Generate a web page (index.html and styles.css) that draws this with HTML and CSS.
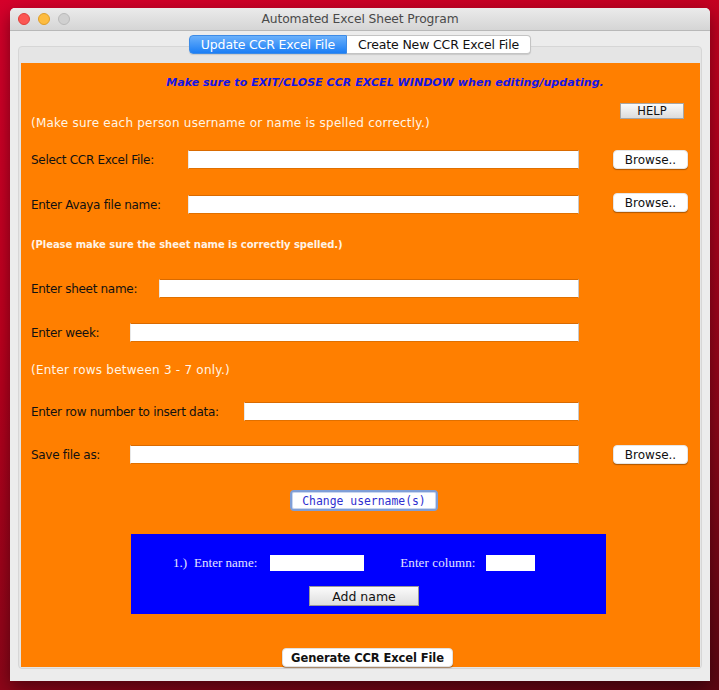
FILE: index.html
```html
<!DOCTYPE html>
<html>
<head>
<meta charset="utf-8">
<title>Automated Excel Sheet Program</title>
<link rel="stylesheet" href="styles.css">
</head>
<body>
<div class="window">
  <div class="titlebar">
    <div class="lights">
      <span class="light red"></span>
      <span class="light yellow"></span>
      <span class="light gray"></span>
    </div>
    <div class="title">Automated Excel Sheet Program</div>
  </div>
  <div class="body">
    <div class="tabs">
      <div class="tab active">Update CCR Excel File</div>
      <div class="tab">Create New CCR Excel File</div>
    </div>
    <div class="tabpanel">
      <div class="orange">
        <div class="warn">Make sure to EXIT/CLOSE CCR EXCEL WINDOW when editing/updating.</div>
        <div class="help-row">
          <div class="note">(Make sure each person username or name is spelled correctly.)</div>
          <button class="help">HELP</button>
        </div>
        <div class="row r-select">
          <span class="label w-select">Select CCR Excel File:</span>
          <span class="field"></span>
          <button class="browse">Browse..</button>
        </div>
        <div class="row r-avaya">
          <span class="label w-select">Enter Avaya file name:</span>
          <span class="field"></span>
          <button class="browse up">Browse..</button>
        </div>
        <div class="bold-note">(Please make sure the sheet name is correctly spelled.)</div>
        <div class="row r-sheet">
          <span class="label w-sheet">Enter sheet name:</span>
          <span class="field"></span>
          <span class="spacer"></span>
        </div>
        <div class="row r-week">
          <span class="label w-week">Enter week:</span>
          <span class="field"></span>
          <span class="spacer"></span>
        </div>
        <div class="note rows-note">(Enter rows between 3 - 7 only.)</div>
        <div class="row r-rownum">
          <span class="label w-rownum">Enter row number to insert data:</span>
          <span class="field"></span>
          <span class="spacer"></span>
        </div>
        <div class="row r-save">
          <span class="label w-week">Save file as:</span>
          <span class="field"></span>
          <button class="browse">Browse..</button>
        </div>
        <button class="change">Change username(s)</button>
        <div class="bluebox">
          <div class="name-row">
            <span class="serif num">1.)</span>
            <span class="serif">Enter name:</span>
            <span class="bfield wide"></span>
            <span class="serif col">Enter column:</span>
            <span class="bfield narrow"></span>
          </div>
          <button class="addname">Add name</button>
        </div>
        <button class="generate">Generate CCR Excel File</button>
      </div>
    </div>
  </div>
</div>
</body>
</html>
```
FILE: styles.css
```css
* { box-sizing: border-box; }
html, body { margin: 0; padding: 0; }
body {
  width: 719px;
  height: 690px;
  overflow: hidden;
  background: linear-gradient(160deg, #d6002b 0%, #c0001f 35%, #8e0619 72%, #5c0612 100%);
  padding: 8px 0 0 10px;
  font-family: "DejaVu Sans", sans-serif;
}
.window {
  width: 700px;
  height: 673px;
  background: #ececec;
  border-radius: 5px 5px 0 0;
  box-shadow: 0 6px 18px rgba(0,0,0,0.45);
  display: flex;
  flex-direction: column;
  overflow: hidden;
}
.titlebar {
  height: 23px;
  flex: none;
  background: linear-gradient(#ebebeb, #d5d5d5);
  border-bottom: 1px solid #b8b8b8;
  display: flex;
  align-items: center;
}
.lights { display: flex; gap: 8px; padding-left: 8px; }
.light { width: 12px; height: 12px; border-radius: 50%; display: block; }
.red { background: #fc5753; border: 1px solid #df3e3a; }
.yellow { background: #fdbc40; border: 1px solid #de9e28; }
.gray { background: #d0d0d0; border: 1px solid #b9b9b9; }
.title {
  flex: 1;
  text-align: center;
  font-size: 12.3px;
  color: #4a4a4a;
  margin-left: -60px;
  letter-spacing: -0.1px;
}
.body {
  flex: 1;
  padding: 4px 8px 0 8px;
}
.tabs {
  display: flex;
  justify-content: center;
  height: 19px;
  position: relative;
  z-index: 2;
}
.tab {
  height: 19px;
  padding: 0 11px 0 11px;
  font-size: 12.5px;
  line-height: 17px;
  background: #fff;
  border: 1px solid #c4c4c4;
  border-left: none;
  border-radius: 0 4px 4px 0;
  color: #111;
  letter-spacing: -0.15px;
  box-shadow: 0 1px 1px rgba(0,0,0,0.12);
}
.tab.active {
  background: linear-gradient(#6ab0fb, #1b7ef5);
  color: #fff;
  border: 1px solid #3d8be6;
  border-radius: 4px 0 0 4px;
  width: 158px;
  padding: 0;
  text-align: center;
}
.tabpanel {
  margin-top: -8px;
  height: 623px;
  background: #e5e5e5;
  border: 1px solid #d6d6d6;
  border-radius: 4px;
  padding: 16px 1px 1px 2px;
}
.orange {
  height: 604px;
  background: #ff7f00;
  display: flex;
  flex-direction: column;
  align-items: flex-start;
}
.warn {
  height: 40px;
  line-height: 40px;
  width: 100%;
  text-align: center;
  padding-left: 49px;
  color: #1414e6;
  font-weight: bold;
  font-style: italic;
  font-size: 11px;
  letter-spacing: 0.05px;
}
.help-row {
  width: 100%;
  height: 28px;
  display: flex;
  justify-content: space-between;
}
.note {
  color: #fff5e6;
  font-size: 12px;
  line-height: 14px;
  padding-left: 10px;
  letter-spacing: 0.23px;
  align-self: flex-end;
  margin-bottom: 1px;
}
.help {
  align-self: flex-start;
  width: 64px;
  height: 16px;
  margin-right: 16px;
  background: linear-gradient(#fafafa, #dcdcdc);
  border: 1px solid #a6a6a6;
  font-family: "DejaVu Sans", sans-serif;
  font-size: 11.5px;
  line-height: 13px;
  color: #111;
  padding: 0;
}
.row {
  width: 100%;
  height: 19px;
  display: flex;
  align-items: center;
  padding-left: 10px;
  padding-right: 12px;
}
.r-select { margin-top: 19px; }
.r-avaya { margin-top: 26px; }
.r-sheet { margin-top: 27px; }
.r-week { margin-top: 25px; }
.r-rownum { margin-top: 24px; }
.r-save { margin-top: 24px; }
.label {
  font-size: 12px;
  color: #111;
  letter-spacing: -0.3px;
  flex: none;
}
.w-select { width: 157px; }
.w-sheet { width: 128px; }
.w-week { width: 99px; }
.w-rownum { width: 213px; }
.field {
  flex: 1;
  height: 19px;
  background: #fff;
  border-top: 1px solid #d96a00;
  border-bottom: 1px solid #e07000;
  border-left: 1px solid #e8e8e8;
  border-right: 1px solid #c9c9c9;
}
.spacer { width: 109px; flex: none; }
.browse {
  flex: none;
  width: 75px;
  height: 19px;
  margin-left: 34px;
  background: #fff;
  border: 1px solid #e6e6e6;
  border-radius: 4px;
  box-shadow: 0 1px 1px rgba(120,60,0,0.6);
  font-family: "DejaVu Sans", sans-serif;
  font-size: 12px;
  color: #111;
  padding: 0;
  line-height: 16px;
}
.browse.up { position: relative; top: -2px; }
.bold-note {
  margin-top: 24px;
  height: 14px;
  line-height: 14px;
  padding-left: 10px;
  color: #fff3e6;
  font-weight: bold;
  font-size: 10px;
  letter-spacing: -0.05px;
}
.rows-note { margin-top: 21px; align-self: flex-start; }
.change {
  margin-top: 26px;
  margin-left: 269px;
  width: 148px;
  height: 21px;
  background: #fff;
  border: 2px solid #7f9ed6;
  border-radius: 4px;
  box-shadow: 0 0 0 1px #c9d7f0 inset;
  font-family: "DejaVu Sans Mono", monospace;
  font-size: 11.4px;
  color: #2f2fd0;
  padding: 0;
  line-height: 16px;
}
.bluebox {
  margin-top: 23px;
  margin-left: 110px;
  width: 475px;
  height: 80px;
  background: #0000ff;
  display: flex;
  flex-direction: column;
  align-items: flex-start;
  padding-top: 21px;
}
.name-row {
  display: flex;
  align-items: center;
  height: 16px;
  padding-left: 42px;
}
.serif {
  font-family: "Liberation Serif", serif;
  font-size: 13px;
  color: #e4e4ff;
}
.num { margin-right: 7px; }
.bfield { height: 16px; background: #fff; display: block; }
.wide { width: 94px; margin-left: 13px; }
.col { margin-left: 36px; letter-spacing: 0.1px; }
.narrow { width: 49px; margin-left: 10px; }
.addname {
  margin-top: 15px;
  margin-left: 178px;
  width: 110px;
  height: 20px;
  background: linear-gradient(#fbfbfb, #dedede);
  border: 1px solid #9a9a9a;
  font-family: "DejaVu Sans", sans-serif;
  font-size: 12.5px;
  color: #111;
  padding: 0;
  line-height: 17px;
}
.generate {
  margin-top: 34px;
  margin-left: 261px;
  width: 171px;
  height: 19px;
  background: #fff;
  border: 1px solid #e0e0e0;
  border-radius: 4px;
  box-shadow: 0 1px 1px rgba(120,60,0,0.6);
  font-family: "DejaVu Sans", sans-serif;
  font-weight: bold;
  font-size: 11.5px;
  color: #111;
  padding: 0;
  line-height: 16px;
  letter-spacing: -0.1px;
}
```
